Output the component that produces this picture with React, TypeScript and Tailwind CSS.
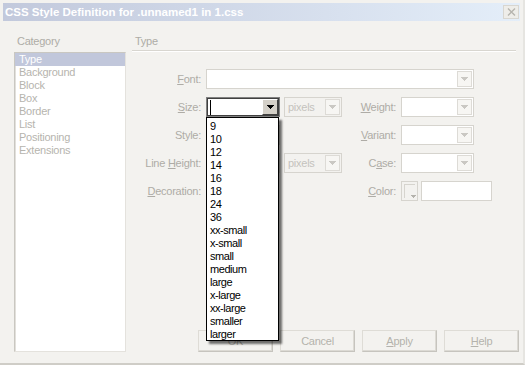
import React from 'react';

const TRI = 'M0 0h7v1H0z M1 1h5v1H1z M2 2h3v1H2z M3 3h1v1H3z';

function Arrow({ active }: { active?: boolean }) {
  if (active) {
    return (
      <div className="w-[16px] h-[16px] bg-[#d4d0c8] border border-t-white border-l-white border-r-[#404040] border-b-[#404040] flex items-center justify-center">
        <svg width="7" height="4" viewBox="0 0 7 4" shapeRendering="crispEdges">
          <path d={TRI} fill="#000" />
        </svg>
      </div>
    );
  }
  return (
    <div className="w-[15px] h-[16px] bg-[#f7f6f3] border border-[#dddbd6] flex items-center justify-center">
      <svg width="7" height="4" viewBox="0 0 7 4" shapeRendering="crispEdges">
        <path d={TRI} fill="#cac8c3" />
      </svg>
    </div>
  );
}

function Select({ w, bg, text }: { w: string; bg?: string; text?: string }) {
  return (
    <div className={`${w} h-[20px] border border-[#d6d4ce] ${bg ?? 'bg-white'} flex items-center justify-between pl-[3px] pr-[1px] shrink-0`}>
      <span className="text-[#c4c2bd] leading-[13px]">{text ?? ''}</span>
      <Arrow />
    </div>
  );
}

function Label({ w, children }: { w: string; children: React.ReactNode }) {
  return <div className={`${w} shrink-0 text-right pr-[5px] text-[#aeaca6] leading-[13px]`}>{children}</div>;
}

function Btn({ children }: { children: React.ReactNode }) {
  return (
    <div className="w-[75px] h-[22px] border border-t-[#dedcd6] border-l-[#dedcd6] border-r-[#c6c4be] border-b-[#c6c4be] shadow-[inset_-1px_-1px_0_#dcdad4] flex items-center justify-center text-[#b4b2ac] leading-[13px]">
      {children}
    </div>
  );
}

const CATS = ['Type', 'Background', 'Block', 'Box', 'Border', 'List', 'Positioning', 'Extensions'];
const SIZES = ['9', '10', '12', '14', '16', '18', '24', '36', 'xx-small', 'x-small', 'small', 'medium', 'large', 'x-large', 'xx-large', 'smaller', 'larger'];

export default function App() {
  return (
    <div className="relative w-[525px] h-[365px] bg-[#f3f2ef] border-b-2 border-r-2 border-b-[#cfcdc7] border-r-[#e6e5e1] font-['Liberation_Sans',Arial,sans-serif] text-[11px] tracking-[-0.25px] overflow-hidden">
      {/* title bar */}
      <div className="mx-[3px] mt-[3px] h-[18px] bg-gradient-to-r from-[#c2c9dc] to-[#e4eef9] flex items-center justify-between pl-[2px] pr-[1px]">
        <span className="text-white font-bold text-[11.5px] tracking-normal leading-[14px]">CSS Style Definition for .unnamed1 in 1.css</span>
        <div className="w-[16px] h-[14px] bg-[#eeede9] border border-[#d8d6d0] flex items-center justify-center">
          <svg width="9" height="8" viewBox="0 0 9 8">
            <path d="M1 0.5L8 7.5M8 0.5L1 7.5" stroke="#b6b4ae" strokeWidth="1.4" />
          </svg>
        </div>
      </div>

      {/* body */}
      <div className="flex pt-[14px]">
        {/* left column */}
        <div className="ml-[14px] w-[112px] flex flex-col">
          <div className="h-[13px] leading-[13px] pl-[3px] text-[#aeaca6]">Category</div>
          <div className="mt-[4px] h-[300px] bg-white border border-t-[#c9c7c1] border-l-[#c9c7c1] border-r-[#e4e2dd] border-b-[#e4e2dd] shadow-[inset_1px_1px_0_#e2e0db]">
            {CATS.map((c, i) => (
              <div
                key={c}
                className={`h-[13px] leading-[13px] pl-[4px] ${i === 0 ? 'bg-[#c1c7db] text-white' : 'text-[#b6b4ae]'}`}
              >
                {c}
              </div>
            ))}
          </div>
        </div>

        {/* right column */}
        <div className="ml-[6px] w-[387px] h-[317px] flex flex-col">
          <div className="h-[13px] leading-[13px] pl-[3px] text-[#aeaca6]">Type</div>
          <div className="mt-[2px] w-[384px] h-px bg-[#d8d6d0]" />
          <div className="w-[384px] h-px bg-white" />

          <div className="mt-[17px] flex flex-col gap-[8px]">
            {/* Font */}
            <div className="flex items-center h-[20px]">
              <Label w="w-[74px]"><span className="underline">F</span>ont:</Label>
              <Select w="w-[268px]" />
            </div>
            {/* Size */}
            <div className="flex items-center h-[20px]">
              <Label w="w-[74px]"><span className="underline">S</span>ize:</Label>
              <div className="w-[74px] h-[20px] border border-[#808080] shrink-0">
                <div className="h-full border border-[#404040] bg-white flex items-center justify-between pr-0">
                  <div className="ml-[2px] w-px h-[15px] bg-black" />
                  <Arrow active />
                </div>
              </div>
              <div className="ml-[4px]">
                <Select w="w-[58px]" bg="bg-[#f3f2ef]" text="pixels" />
              </div>
              <Label w="w-[59px]"><span className="underline">W</span>eight:</Label>
              <Select w="w-[73px]" />
            </div>
            {/* Style */}
            <div className="flex items-center h-[20px]">
              <Label w="w-[74px]">Style:</Label>
              <Select w="w-[74px]" />
              <div className="w-[62px] shrink-0" />
              <Label w="w-[59px]"><span className="underline">V</span>ariant:</Label>
              <Select w="w-[73px]" />
            </div>
            {/* Line height */}
            <div className="flex items-center h-[20px]">
              <Label w="w-[74px]">Line <span className="underline">H</span>eight:</Label>
              <Select w="w-[74px]" />
              <div className="ml-[4px]">
                <Select w="w-[58px]" bg="bg-[#f3f2ef]" text="pixels" />
              </div>
              <Label w="w-[59px]">C<span className="underline">a</span>se:</Label>
              <Select w="w-[73px]" />
            </div>
            {/* Decoration / Color */}
            <div className="flex items-center h-[20px]">
              <Label w="w-[74px]"><span className="underline">D</span>ecoration:</Label>
              <div className="w-[136px] shrink-0" />
              <Label w="w-[59px]"><span className="underline">C</span>olor:</Label>
              <div className="relative w-[17px] h-[20px] border border-[#d6d4ce] bg-[#f3f2ef] shrink-0">
                <div className="mt-[2px] ml-[2px] w-[11px] h-[14px] border-l border-t border-[#d6d4ce]" />
                <svg className="absolute right-[1px] bottom-[2px]" width="5" height="3" viewBox="0 0 5 3" shapeRendering="crispEdges">
                  <path d="M0 0h5v1H0z M1 1h3v1H1z M2 2h1v1H2z" fill="#b4b2ac" />
                </svg>
              </div>
              <div className="ml-[3px] w-[71px] h-[20px] border border-[#d6d4ce] bg-white shrink-0" />
            </div>
          </div>

          <div className="mt-auto flex gap-[7px] pl-[66px]">
            <Btn>OK</Btn>
            <Btn>Cancel</Btn>
            <Btn><span className="underline">A</span>pply</Btn>
            <Btn><span className="underline">H</span>elp</Btn>
          </div>
        </div>
      </div>

      {/* open dropdown list */}
      <div className="absolute left-[206px] top-[117px] w-[73px] h-[224px] bg-white border border-black shadow-[3px_3px_2px_rgba(0,0,0,0.55)] pt-[2px] tracking-[-0.45px]">
        {SIZES.map((s) => (
          <div key={s} className="h-[13px] leading-[13px] pl-[3px] text-black">
            {s}
          </div>
        ))}
      </div>
    </div>
  );
}
